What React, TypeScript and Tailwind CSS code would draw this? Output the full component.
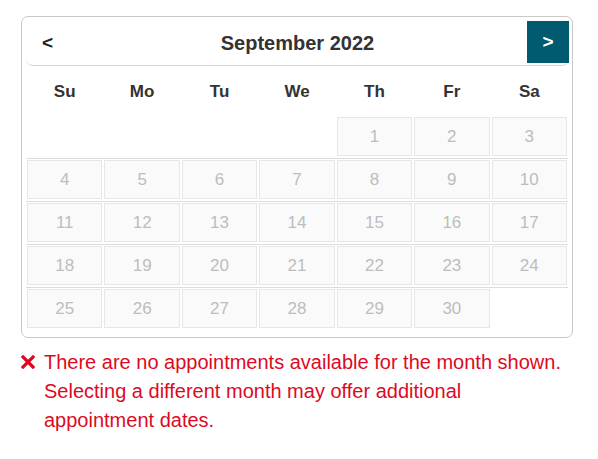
const DAY_NAMES = ["Su", "Mo", "Tu", "We", "Th", "Fr", "Sa"]

// September 2022 starts on a Thursday
function buildWeeks() {
  const cells: (number | null)[] = [null, null, null, null]
  for (let d = 1; d <= 30; d++) cells.push(d)
  while (cells.length % 7 !== 0) cells.push(null)
  const weeks: (number | null)[][] = []
  for (let i = 0; i < cells.length; i += 7) weeks.push(cells.slice(i, i + 7))
  return weeks
}

export default function App() {
  const weeks = buildWeeks()

  return (
    <div className="bg-white w-[598px] h-[459px] pt-4 pl-[21px] font-['Liberation_Sans',Arial,sans-serif]">
      <div className="w-[552px] h-[322px] border border-[#c8c8c8] rounded-[7px] pt-1 pl-1 pr-[3px]">
        <div className="h-[45px] flex items-start justify-between border-b border-[#d6d6d6] rounded-b-[7px]">
          <button className="h-[42px] w-[42px] flex items-center justify-center text-[19px] font-bold text-[#222] pl-[1px] pt-[2px]">
            &lt;
          </button>
          <div className="h-[42px] flex items-center text-[20px] font-bold text-[#333] pt-[2px]">September 2022</div>
          <button className="h-[42px] w-[42px] flex items-center justify-center bg-[#005a70] text-white text-[19px] font-bold">
            &gt;
          </button>
        </div>

        <div className="grid grid-cols-7 w-[542px] h-[51px] items-center">
          {DAY_NAMES.map(d => (
            <div key={d} className="text-center text-[17px] font-bold text-[#333]">{d}</div>
          ))}
        </div>

        <div className="w-[542px] divide-y divide-[#dcdcdc]">
          {weeks.map((week, wi) => (
            <div key={wi} className={"grid grid-cols-7 pb-[2px] " + (wi === 0 ? "pt-0" : "pt-[1px]")}>
              {week.map((day, di) => (
                <div key={di} className="px-[1px] h-[39px]">
                  {day !== null && (
                    <div className="h-[39px] border border-[#e6e6e6] bg-[#fafafa] flex items-center justify-center text-[17px] text-[#bdbdbd]">
                      {day}
                    </div>
                  )}
                </div>
              ))}
            </div>
          ))}
        </div>
      </div>

      <div className="flex items-start mt-[10px] text-[#dd0a1f]">
        <svg width="14" height="14" viewBox="0 0 14 14" className="mt-[7px] mr-[9px] shrink-0">
          <path d="M2 2 L12 12 M12 2 L2 12" stroke="#dd0a1f" strokeWidth="3.2" strokeLinecap="square" />
        </svg>
        <p className="text-[20px] leading-[29px] w-[522px]">
          There are no appointments available for the month shown. Selecting a different month may offer additional
          appointment dates.
        </p>
      </div>
    </div>
  )
}
